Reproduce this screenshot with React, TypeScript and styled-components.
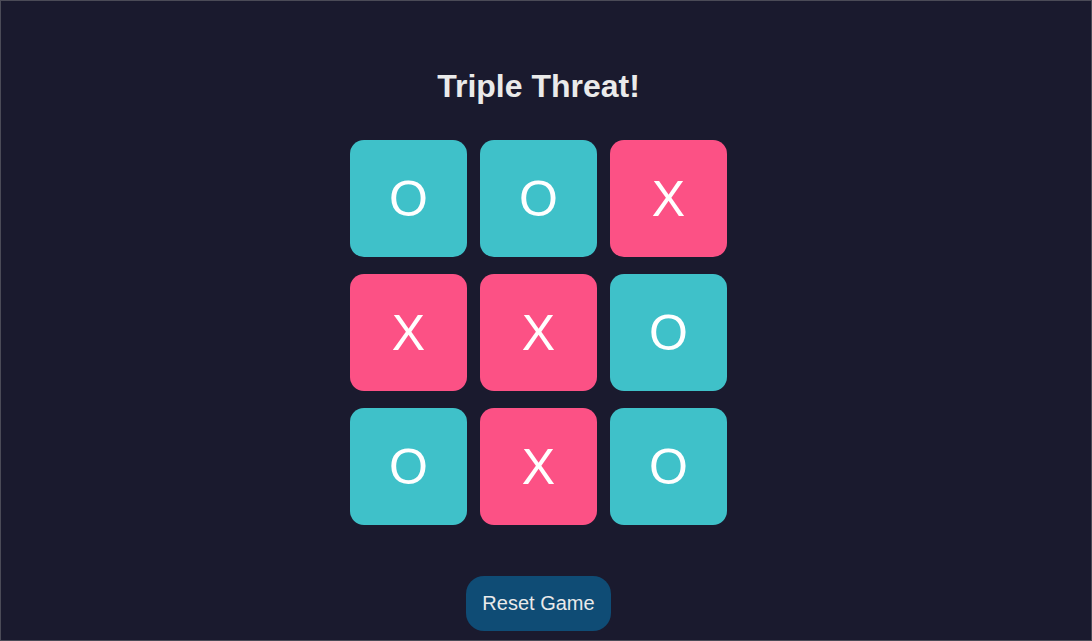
import React from "react";
import styled, { createGlobalStyle } from "styled-components";

const Global = createGlobalStyle`
  html, body {
    margin: 0;
    padding: 0;
    background: #1a1a2e;
  }
  * { box-sizing: border-box; }
`;

const Page = styled.div`
  width: 1092px;
  height: 641px;
  border: 1px solid #4b4b57;
  background: #1a1a2e;
  display: flex;
  flex-direction: column;
  align-items: center;
  padding: 69px 15px 0 0;
  font-family: "Liberation Sans", Arial, sans-serif;
  overflow: hidden;
`;

const Title = styled.h1`
  margin: 0;
  font-size: 32px;
  line-height: 32px;
  height: 32px;
  font-weight: 700;
  color: #eaeaea;
`;

const Board = styled.div`
  margin-top: 38px;
  display: grid;
  grid-template-columns: repeat(3, 117px);
  grid-auto-rows: 117px;
  column-gap: 13px;
  row-gap: 17px;
`;

const Cell = styled.button<{ $mark: "X" | "O" }>`
  border: none;
  padding: 0;
  border-radius: 14px;
  background: ${(p) => (p.$mark === "X" ? "#fc5185" : "#3fc1c9")};
  color: #ffffff;
  font-family: "Liberation Sans", Arial, sans-serif;
  font-size: 50px;
  line-height: 1;
  display: flex;
  align-items: center;
  justify-content: center;
  cursor: pointer;
`;

const ResetButton = styled.button`
  margin-top: 51px;
  width: 145px;
  height: 55px;
  border: none;
  border-radius: 18px;
  background: #0f4c75;
  color: #eaeaea;
  font-family: "Liberation Sans", Arial, sans-serif;
  font-size: 20px;
  cursor: pointer;
`;

const board: ("X" | "O")[] = ["O", "O", "X", "X", "X", "O", "O", "X", "O"];

export default function App() {
  return (
    <>
      <Global />
      <Page>
        <Title>Triple Threat!</Title>
        <Board>
          {board.map((m, i) => (
            <Cell key={i} $mark={m}>
              {m}
            </Cell>
          ))}
        </Board>
        <ResetButton>Reset Game</ResetButton>
      </Page>
    </>
  );
}
